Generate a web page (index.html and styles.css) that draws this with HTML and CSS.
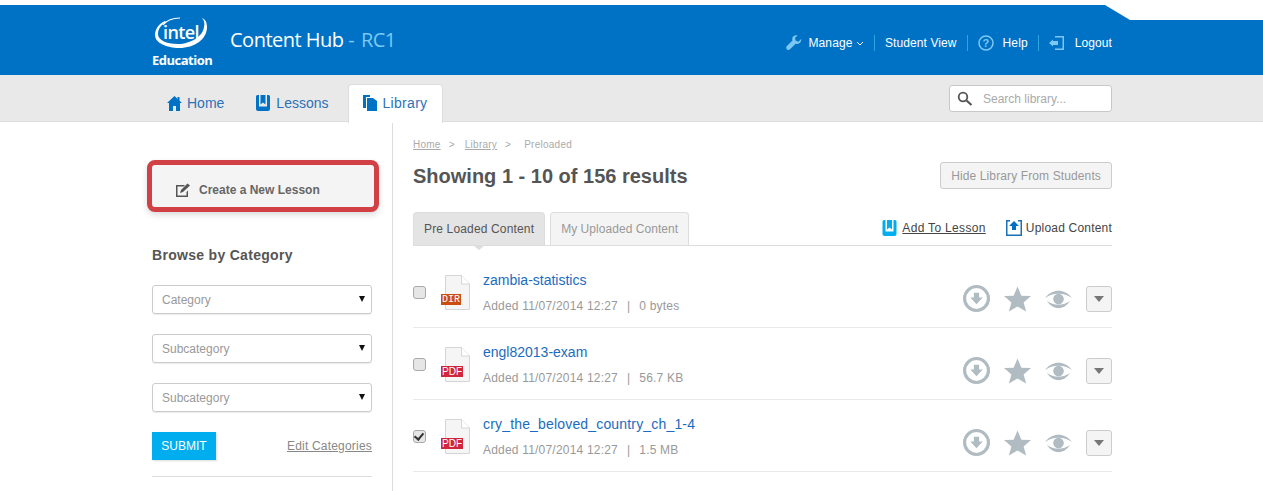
FILE: index.html
```html
<!DOCTYPE html>
<html>
<head>
  <title>Content Hub - RC1</title>
  <meta charset="utf-8">
  <link rel="stylesheet" href="styles.css">
</head>
<body>
<header class="top">
  <div class="notch"></div>
  <div class="wrap top-in">
    <div class="logo">
      <svg class="swoosh" width="58" height="38" viewBox="0 0 58 38"><path d="M12 8C5 11 2 17 2 22c0 8 12 13 24 13 16 0 28-9 28-21 0-5-2-8-5-9 2 2 3 5 2 9-1 9-13 17-26 17-12 0-20-4-20-10 0-5 3-9 8-12z" fill="#fff"/><path d="M10 12C14 7 20 5 27 5" fill="none" stroke="#fff" stroke-width="1.200"/></svg>
      <span class="intel">intel</span>
      <span class="edu">Education</span>
    </div>
    <div class="title">Content Hub <span class="rc">- RC1</span></div>
    <nav class="usernav">
      <svg class="wrench" width="16" height="16" viewBox="0 0 18 18"><path d="M17 4.500l-3 3-3-1-1-3 3-3C10 0 7 1.500 7 4.500c0 .7.100 1.200.3 1.700L1 12.500c-1 1-1 2.500-.2 3.500s2.700 1.100 3.700.1l6.300-6.300c3.700 1.200 7-1.500 6.200-5.800z" fill="#7cc8f2"/></svg>
      <a class="manage">Manage <svg width="8" height="5" viewBox="0 0 8 5"><path d="M1 1l3 3 3-3" fill="none" stroke="#fff"/></svg></a>
      <i class="sep"></i>
      <a>Student View</a>
      <i class="sep"></i>
      <svg width="16" height="16" viewBox="0 0 16 16"><circle cx="8" cy="8" r="7" fill="none" stroke="#7cc8f2" stroke-width="1.500"/><text x="8" y="12" text-anchor="middle" class="q">?</text></svg>
      <a class="help">Help</a>
      <i class="sep"></i>
      <svg width="16" height="16" viewBox="0 0 16 16"><path d="M6 1h9v14H6v-1.500h7.500v-11H6z" fill="#7cc8f2"/><path d="M0 8l4-3.500V6h5v4H4v1.500z" fill="#7cc8f2"/></svg>
      <a class="logout">Logout</a>
    </nav>
  </div>
</header>

<div class="tabbar">
  <div class="wrap tabbar-in">
    <a class="tab">
      <svg width="15" height="15" viewBox="0 0 15 15"><path d="M7.500 0L15 7h-2v8H9v-5H6v5H2V7H0z" fill="#0072c6"/><path d="M10.500 1h2v4h-2z" fill="#0072c6"/></svg>
      Home
    </a>
    <a class="tab tab-lessons">
      <svg width="14" height="16" viewBox="0 0 14 16"><path d="M0 1.500Q0 0 1.500 0H3v11.500h8V0h1.500Q14 0 14 1.500V14q0 2-2 2H2q-2 0-2-2z" fill="#0072c6"/><path d="M4.500 0h5v9.500L7 7.500l-2.500 2z" fill="#0072c6"/></svg>
      Lessons
    </a>
    <a class="tab tab-on">
      <svg width="14" height="16" viewBox="0 0 14 16"><path d="M0 0h7v2H3v11H0z" fill="#0072c6"/><path d="M4 3h6l4 3v10H4z" fill="#0072c6"/></svg>
      Library
    </a>
    <div class="search">
      <svg width="16" height="16" viewBox="0 0 16 16"><circle cx="6" cy="6" r="4.300" fill="none" stroke="#555" stroke-width="1.800"/><path d="M9.500 9.500l5 4.500" stroke="#555" stroke-width="2.200"/></svg>
      <span>Search library...</span>
    </div>
  </div>
</div>

<div class="wrap page">
  <aside class="side">
    <div class="create">
      <svg width="16" height="15" viewBox="0 0 16 15"><path d="M1 2h9L8.500 3.500h-6v9h9V9L13 7.500V14H1z" fill="#555"/><path d="M5 10l1-3 6.500-6.500 2.500 2L8 9z" fill="#555"/></svg>
      Create a New Lesson
    </div>
    <h3>Browse by Category</h3>
    <div class="sel">Category<b></b></div>
    <div class="sel">Subcategory<b></b></div>
    <div class="sel">Subcategory<b></b></div>
    <div class="side-btns">
      <a class="submit">SUBMIT</a>
      <a class="edit">Edit Categories</a>
    </div>
    <hr class="side-hr">
  </aside>

  <main class="main">
    <div class="crumbs"><a>Home</a><span>&gt;</span><a>Library</a><span>&gt;</span>Preloaded</div>
    <div class="head">
      <h1>Showing 1 - 10 of 156 results</h1>
      <a class="hide">Hide Library From Students</a>
    </div>
    <div class="ctabs">
      <a class="ctab ctab-on">Pre Loaded Content</a>
      <a class="ctab">My Uploaded Content</a>
      <div class="actions">
        <svg width="15" height="16" viewBox="0 0 14 16"><path d="M0 1.500Q0 0 1.500 0H3v11.500h8V0h1.500Q14 0 14 1.500V14q0 2-2 2H2q-2 0-2-2z" fill="#00aeef"/><path d="M4.500 0h5v9.500L7 7.500l-2.500 2z" fill="#00aeef"/></svg>
        <a class="add">Add To Lesson</a>
        <svg class="up" width="16" height="16" viewBox="0 0 16 16"><path d="M0 0h4v1.500H1.500v13h13v-13H12V0h4v16H0z" fill="#1b6fb5"/><path d="M8 1l5 5h-3v4H6V6H3z" fill="#0072c6"/></svg>
        <span class="upload">Upload Content</span>
      </div>
    </div>

    <div class="rows">
      <div class="row">
        <input type="checkbox">
        <div class="file"><svg width="25" height="35" viewBox="0 0 25 35"><path d="M.5.500h16l8 8.500v25.500H.5z" fill="#f5f5f5" stroke="#d5d5d5"/><path d="M16.500.500V9h8" fill="#fff" stroke="#d5d5d5"/></svg><em class="dir">DIR</em></div>
        <div class="info">
          <a>zambia-statistics</a>
          <p>Added 11/07/2014 12:27<span>|</span>0 bytes</p>
        </div>
        <div class="tools">
          <svg width="27" height="27" viewBox="0 0 26 26"><circle cx="13" cy="13" r="11.500" fill="none" stroke="#b0bbc2" stroke-width="3"/><path d="M10.500 7.500h5V12h3.500L13 18.500 7 12h3.500z" fill="#b0bbc2"/></svg>
          <svg width="27" height="26" viewBox="0 0 28 26"><path d="M14 0l4 9.500 10 .5-7.700 6.500L23 26l-9-5.300L5 26l2.700-9.500L0 10l10-.5z" fill="#b0bbc2"/></svg>
          <svg width="27" height="20" viewBox="0 0 28 20"><circle cx="14" cy="10" r="5.500" fill="#b0bbc2"/><path d="M0 9C8-1 20-1 28 9 20 3 8 3 0 9z" fill="#b0bbc2"/><path d="M2 12c7 10 17 10 24 0-7 5-17 5-24 0z" fill="#b0bbc2"/></svg>
          <a class="drop"><b></b></a>
        </div>
      </div>

      <div class="row">
        <input type="checkbox">
        <div class="file"><svg width="25" height="35" viewBox="0 0 25 35"><path d="M.5.500h16l8 8.500v25.500H.5z" fill="#f5f5f5" stroke="#d5d5d5"/><path d="M16.500.500V9h8" fill="#fff" stroke="#d5d5d5"/></svg><em class="pdf">PDF</em></div>
        <div class="info">
          <a>engl82013-exam</a>
          <p>Added 11/07/2014 12:27<span>|</span>56.7 KB</p>
        </div>
        <div class="tools">
          <svg width="27" height="27" viewBox="0 0 26 26"><circle cx="13" cy="13" r="11.500" fill="none" stroke="#b0bbc2" stroke-width="3"/><path d="M10.500 7.500h5V12h3.500L13 18.500 7 12h3.500z" fill="#b0bbc2"/></svg>
          <svg width="27" height="26" viewBox="0 0 28 26"><path d="M14 0l4 9.500 10 .5-7.700 6.500L23 26l-9-5.300L5 26l2.700-9.500L0 10l10-.5z" fill="#b0bbc2"/></svg>
          <svg width="27" height="20" viewBox="0 0 28 20"><circle cx="14" cy="10" r="5.500" fill="#b0bbc2"/><path d="M0 9C8-1 20-1 28 9 20 3 8 3 0 9z" fill="#b0bbc2"/><path d="M2 12c7 10 17 10 24 0-7 5-17 5-24 0z" fill="#b0bbc2"/></svg>
          <a class="drop"><b></b></a>
        </div>
      </div>

      <div class="row">
        <input type="checkbox" checked>
        <div class="file"><svg width="25" height="35" viewBox="0 0 25 35"><path d="M.5.500h16l8 8.500v25.500H.5z" fill="#f5f5f5" stroke="#d5d5d5"/><path d="M16.500.500V9h8" fill="#fff" stroke="#d5d5d5"/></svg><em class="pdf">PDF</em></div>
        <div class="info">
          <a class="long">cry_the_beloved_country_ch_1-4</a>
          <p>Added 11/07/2014 12:27<span>|</span>1.5 MB</p>
        </div>
        <div class="tools">
          <svg width="27" height="27" viewBox="0 0 26 26"><circle cx="13" cy="13" r="11.500" fill="none" stroke="#b0bbc2" stroke-width="3"/><path d="M10.500 7.500h5V12h3.500L13 18.500 7 12h3.500z" fill="#b0bbc2"/></svg>
          <svg width="27" height="26" viewBox="0 0 28 26"><path d="M14 0l4 9.500 10 .5-7.700 6.500L23 26l-9-5.300L5 26l2.700-9.500L0 10l10-.5z" fill="#b0bbc2"/></svg>
          <svg width="27" height="20" viewBox="0 0 28 20"><circle cx="14" cy="10" r="5.500" fill="#b0bbc2"/><path d="M0 9C8-1 20-1 28 9 20 3 8 3 0 9z" fill="#b0bbc2"/><path d="M2 12c7 10 17 10 24 0-7 5-17 5-24 0z" fill="#b0bbc2"/></svg>
          <a class="drop"><b></b></a>
        </div>
      </div>
    </div>
  </main>
</div>
</body>
</html>
```

FILE: styles.css
```css
html, body { margin: 0; padding: 0; height: 100%; overflow: hidden; }
body { font-family: "Liberation Sans", Arial, sans-serif; font-size: 12px; color: #555; background: #fff; }
a { color: inherit; }

.wrap { width: 960px; margin-left: 152px; }

/* header */
.top { position: relative; margin-top: 5px; height: 70px; background: #0072c6; color: #fff; }
.notch { position: absolute; top: 0; right: 0; width: 158px; height: 15px; background: #fff; clip-path: polygon(0 0, 100% 0, 100% 100%, 25px 100%); }
.top-in { display: flex; align-items: flex-start; height: 70px; }
.logo { position: relative; width: 60px; height: 70px; flex: none; }
.swoosh { position: absolute; left: 1px; top: 8px; }
.intel { position: absolute; left: 11px; top: 15px; font-size: 18px; line-height: 24px; font-weight: 600; font-family: "Open Sans", sans-serif; letter-spacing: -.6px; }
.edu { position: absolute; left: 0; top: 46px; font-size: 13px; line-height: 18px; font-weight: bold; font-family: "Open Sans", sans-serif; letter-spacing: -.5px; }
.title { margin-left: 18px; margin-top: 23px; font-size: 20px; font-family: "Open Sans", sans-serif; line-height: 24px; letter-spacing: -.5px; }
.rc { color: #7cc8f2; word-spacing: 2px; }
.usernav { margin-left: auto; margin-top: 29px; display: flex; align-items: center; height: 18px; letter-spacing: .1px; }
.sep { width: 1px; height: 16px; background: #2aa5e2; margin: 0 10px; }
.manage { margin-left: 6px; }
.manage svg { vertical-align: 1px; }
.q { font-size: 11px; font-weight: bold; font-family: "Liberation Sans", sans-serif; fill: #7cc8f2; }
.help { margin-left: 9px; }
.logout { margin-left: 10px; }

/* tabs */
.tabbar { height: 46px; background: #e9e9e9; border-bottom: 1px solid #ddd; }
.tabbar-in { display: flex; height: 46px; position: relative; }
.tab { display: flex; align-items: center; gap: 5px; margin-top: 9px; height: 38px; padding: 0 15px; font-size: 14px; color: #2c72b8; }
.tab-lessons { margin-left: 2px; gap: 6px; }
.tab-on { background: #fff; border: 1px solid #ddd; border-bottom: 0; border-radius: 4px 4px 0 0; height: 36px; padding: 0 15px 2px 14px; margin-left: 4px; gap: 6px; letter-spacing: .3px; }
.search { margin-left: auto; margin-top: 10px; height: 25px; background: #fff; border: 1px solid #c8c8c8; border-radius: 3px; display: flex; align-items: center; gap: 10px; padding-left: 7px; width: 154px; color: #aaa; }

/* layout */
.page { display: flex; height: 369px; }
.side { width: 220px; flex: none; padding-right: 20px; border-right: 1px solid #ddd; }
.main { flex: 1; margin-left: 20px; min-width: 0; }

/* sidebar */
.create { margin-top: 38px; margin-left: -5px; height: 52px; width: 232px; box-sizing: border-box; background: #f4f4f4; border: 5px solid #d04045; border-radius: 8px; box-shadow: 0 3px 6px rgba(0,0,0,.14); display: flex; align-items: center; gap: 8px; padding: 8px 0 0 23px; font-weight: bold; color: #666; }
.side h3 { margin: 35px 0 22px; font-size: 14px; line-height: 16px; color: #555; letter-spacing: .3px; }
.sel { position: relative; height: 27px; line-height: 29px; border: 1px solid #ccc; border-radius: 3px; padding-left: 9px; margin-bottom: 20px; color: #999; box-shadow: 0 1px 1px rgba(0,0,0,.08); }
.sel b { position: absolute; right: 6px; top: 10px; border: 3px solid transparent; border-top: 6px solid #111; border-bottom: 0; }
.side-btns { display: flex; justify-content: space-between; align-items: center; }
.submit { background: #00aeef; color: #fff; width: 64px; height: 28px; line-height: 28px; text-align: center; box-shadow: 1px 1px 2px rgba(0,0,0,.15); }
.edit { color: #888; text-decoration: underline; letter-spacing: .2px; }
.side-hr { border: 0; border-top: 1px solid #ddd; margin: 16px 0 0; }

/* main */
.crumbs { margin-top: 17px; font-size: 10px; line-height: 12px; color: #aaa; letter-spacing: .25px; }
.crumbs a { text-decoration: underline; }
.crumbs span { margin: 0 10px 0 8px; }
.crumbs span:last-of-type { margin-right: 13px; }
.head { display: flex; justify-content: space-between; align-items: center; margin-top: 11px; }
.head h1 { margin: 0; font-size: 20px; line-height: 28px; color: #555; }
.hide { align-self: flex-start; height: 25px; line-height: 27px; padding: 0 10px; background: #f4f4f4; border: 1px solid #ccc; border-radius: 3px; color: #999; letter-spacing: .12px; }
.ctabs { display: flex; align-items: flex-end; gap: 5px; margin-top: 21px; height: 34px; border-bottom: 1px solid #ddd; letter-spacing: .15px; }
.ctab { height: 32px; line-height: 32px; padding: 0 10px; border: 1px solid #ddd; border-bottom: 0; border-radius: 4px 4px 0 0; background: #f4f4f4; color: #999; }
.ctab + .ctab { letter-spacing: .05px; }
.ctab-on { background: #e4e4e4; color: #555; position: relative; }
.ctab-on::after { content: ""; position: absolute; left: 60px; top: 33px; border: 5px solid transparent; border-top: 4px solid #ddd; border-bottom: 0; }
.actions { margin-left: auto; display: flex; align-items: center; gap: 5px; height: 32px; margin-bottom: 1px; color: #444; letter-spacing: .33px; }
.add { text-decoration: underline; }
.up { margin-left: 15px; }
.upload { margin-left: -1px; letter-spacing: .2px; }

.rows { margin-top: 10px; }
.row { display: flex; align-items: flex-start; height: 71px; border-bottom: 1px solid #e8e8e8; }
input[type=checkbox] { appearance: none; position: relative; margin: 30px 0 0; width: 13px; height: 13px; flex: none; background: #e6e6e6; border: 1px solid #aaa; border-radius: 3px; }
input[type=checkbox]:checked::after { content: ""; position: absolute; left: 2px; top: 0; width: 4px; height: 7px; border: solid #333; border-width: 0 2px 2px 0; transform: rotate(40deg); }
.file { position: relative; width: 25px; height: 35px; margin: 19px 13px 0 19px; flex: none; }
.file svg { display: block; }
.file em { position: absolute; left: -4px; top: 19px; height: 11px; font-style: normal; color: #fff; font-size: 10px; line-height: 11px; padding: 0 1px; }
.dir { background: #cc4e0f; font-family: "Liberation Mono", monospace; padding: 0 .5px; }
.pdf { background: #d0273c; }
.info a { display: block; margin-top: 16px; font-size: 14px; line-height: 16px; color: #1a6cc0; }
.info a.long { letter-spacing: .17px; }
.info p { margin: 11px 0 0; line-height: 14px; color: #999; letter-spacing: .2px; }
.info p span { margin: 0 9px; }
.tools { margin-left: auto; margin-top: 29px; display: flex; align-items: center; gap: 14px; }
.drop { width: 24px; height: 24px; background: #f4f4f4; border: 1px solid #ccc; border-radius: 3px; display: flex; align-items: center; justify-content: center; }
.drop b { border: 5px solid transparent; border-top: 6px solid #777; border-bottom: 0; }
```
